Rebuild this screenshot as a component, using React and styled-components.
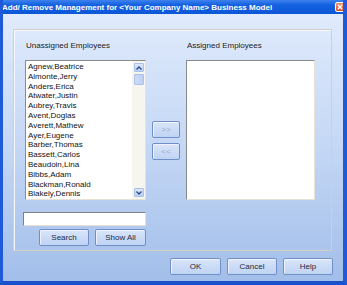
import styled, { createGlobalStyle } from "styled-components";

const Global = createGlobalStyle`
  body {
    margin: 0;
    font-family: "Liberation Sans", Arial, sans-serif;
  }
`

const Window = styled.div`
  width: 347px;
  height: 285px;
  box-sizing: border-box;
  display: flex;
  flex-direction: column;
  background: #1d5ad8;
  border-left: 3px solid #1f5bd9;
  border-right: 4px solid #1f5bd9;
  border-bottom: 4px solid #1a50cc;
  overflow: hidden;
`

const TitleBar = styled.div`
  height: 14px;
  margin: 0 -4px 0 -3px;
  padding: 0 2px;
  display: flex;
  align-items: center;
  justify-content: space-between;
  background: linear-gradient(#3f82ee, #1461e0 35%, #0c57d8);
`

const Title = styled.span`
  color: #fff;
  font-size: 8px;
  font-weight: bold;
  white-space: nowrap;
`

const Close = styled.div`
  width: 10px;
  height: 10px;
  box-sizing: border-box;
  border: 1px solid #fff;
  border-radius: 2px;
  background: linear-gradient(#f0906c, #d9522c);
  display: flex;
  align-items: center;
  justify-content: center;
`

const Client = styled.div`
  flex: 1;
  display: flex;
  flex-direction: column;
  padding: 15px 10px 0 10px;
  background: linear-gradient(#e0ebfc, #c4d7f5 50%, #a2bee9);
`

const Group = styled.div`
  width: 319px;
  height: 222px;
  box-sizing: border-box;
  border: 1px solid #d3cfc2;
  box-shadow: inset 1px 1px 0 #f6f8fc;
  padding: 11px 0 0 9px;
  display: flex;
  gap: 6px;
`

const Column = styled.div`
  display: flex;
  flex-direction: column;
  padding-top: ${p => p.$top || 0}px;
  gap: ${p => p.$gap || 0}px;
`

const Label = styled.div`
  font-size: 8px;
  line-height: 10px;
  color: #222;
  margin: 0 0 9px ${p => p.$indent || 0}px;
  white-space: nowrap;
`

const ListBox = styled.div`
  width: ${p => p.$w}px;
  height: 140px;
  box-sizing: border-box;
  margin-left: ${p => p.$indent || 0}px;
  background: #fff;
  border: 1px solid;
  border-color: #8a8a8a #e6e2d4 #e6e2d4 #8a8a8a;
  display: flex;
`

const Items = styled.div`
  flex: 1;
  padding: 1px 0 0 2px;
  overflow: hidden;
`

const Item = styled.div`
  font-size: 8px;
  line-height: 9.8px;
  color: #111;
  white-space: nowrap;
`

const Scrollbar = styled.div`
  width: 13px;
  box-sizing: border-box;
  padding: 2px 1px 2px 2px;
  background: #f6f5ee;
  display: flex;
  flex-direction: column;
  gap: 2px;
`

const ScrollBtn = styled.div`
  height: 9px;
  box-sizing: border-box;
  border: 1px solid #a9bfe8;
  border-radius: 1px;
  background: linear-gradient(#dce7fb, #bcd0f5);
  display: flex;
  align-items: center;
  justify-content: center;
  margin-top: ${p => (p.$bottom ? "auto" : 0)};
`

const Thumb = styled.div`
  height: 11px;
  box-sizing: border-box;
  border: 1px solid #a9bfe8;
  border-radius: 1px;
  background: linear-gradient(90deg, #cddcf8, #bdd0f4);
`

const TextBox = styled.div`
  width: 123px;
  height: 14px;
  box-sizing: border-box;
  margin-top: 12px;
  background: #fff;
  border: 1px solid;
  border-color: #808080 #e6e2d4 #e6e2d4 #808080;
`

const ButtonRow = styled.div`
  display: flex;
  justify-content: flex-end;
  gap: ${p => p.$gap || 6}px;
  margin-top: ${p => p.$top || 0}px;
  width: ${p => (p.$w ? p.$w + "px" : "auto")};
`

const Button = styled.div`
  width: ${p => p.$w || 51}px;
  height: 17px;
  box-sizing: border-box;
  border: 1px solid #6f8fc6;
  border-radius: 2px;
  background: linear-gradient(#d9e5fa, #bfd3f3);
  box-shadow: inset 1px 1px 0 #eef3fd;
  display: flex;
  align-items: center;
  justify-content: center;
  font-size: 8px;
  color: ${p => (p.$disabled ? "#97a7c4" : "#1e2a44")};
`

const Footer = styled.div`
  display: flex;
  justify-content: flex-end;
  gap: 6px;
  margin-top: 7px;
  padding-right: 0;
`

const employees = [
  "Agnew,Beatrice",
  "Almonte,Jerry",
  "Anders,Erica",
  "Atwater,Justin",
  "Aubrey,Travis",
  "Avent,Doglas",
  "Averett,Mathew",
  "Ayer,Eugene",
  "Barber,Thomas",
  "Bassett,Carlos",
  "Beaudoin,Lina",
  "Bibbs,Adam",
  "Blackman,Ronald",
  "Blakely,Dennis",
]

const Arrow = ({ up }) => (
  <svg width="6" height="4" viewBox="0 0 6 4">
    <path
      d={up ? "M0.5 3.5 L3 1 L5.5 3.5" : "M0.5 0.5 L3 3 L5.5 0.5"}
      fill="none"
      stroke="#2b4a8a"
      strokeWidth="1.3"
    />
  </svg>
)

const App = () => {
  return (
    <Window>
      <Global />
      <TitleBar>
        <Title>Add/ Remove Management for &lt;Your Company Name&gt; Business Model</Title>
        <Close>
          <svg width="6" height="6" viewBox="0 0 6 6">
            <path d="M0.8 0.8 L5.2 5.2 M5.2 0.8 L0.8 5.2" stroke="#fff" strokeWidth="1.4" />
          </svg>
        </Close>
      </TitleBar>
      <Client>
        <Group>
          <Column>
            <Label $indent={3}>Unassigned Employees</Label>
            <ListBox $w={121} $indent={2}>
              <Items>
                {employees.map(name => (
                  <Item key={name}>{name}</Item>
                ))}
              </Items>
              <Scrollbar>
                <ScrollBtn><Arrow up /></ScrollBtn>
                <Thumb />
                <ScrollBtn $bottom><Arrow /></ScrollBtn>
              </Scrollbar>
            </ListBox>
            <TextBox />
            <ButtonRow $top={3} $w={123}>
              <Button $w={50}>Search</Button>
              <Button $w={51}>Show All</Button>
            </ButtonRow>
          </Column>
          <Column $top={80} $gap={5}>
            <Button $w={28} $disabled>&gt;&gt;</Button>
            <Button $w={28} $disabled>&lt;&lt;</Button>
          </Column>
          <Column>
            <Label $indent={1}>Assigned Employees</Label>
            <ListBox $w={129} />
          </Column>
        </Group>
        <Footer>
          <Button $w={51}>OK</Button>
          <Button $w={50}>Cancel</Button>
          <Button $w={50}>Help</Button>
        </Footer>
      </Client>
    </Window>
  )
}

export default App
